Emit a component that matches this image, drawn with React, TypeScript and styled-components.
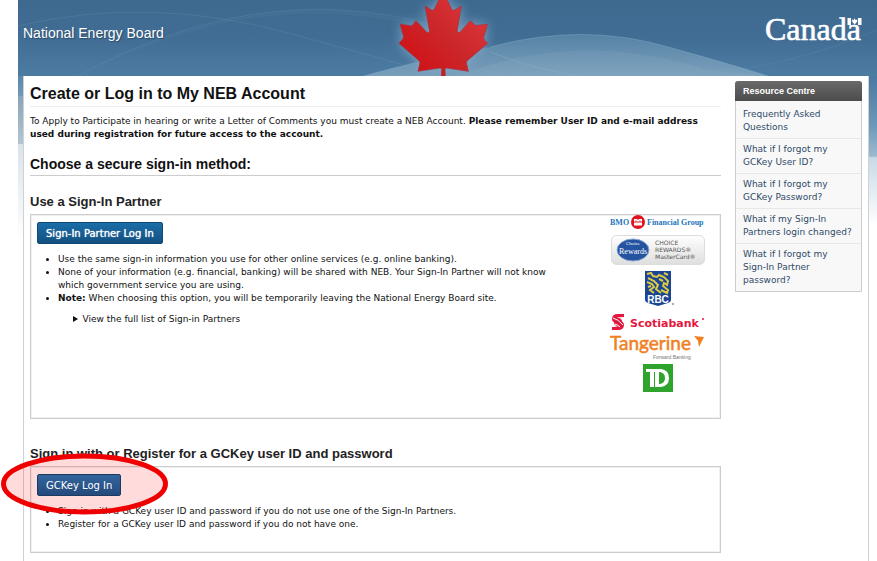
import React from "react";
import styled, { createGlobalStyle } from "styled-components";

const verdana = `"DejaVu Sans", Verdana, sans-serif`;
const arial = `"Liberation Sans", Arial, sans-serif`;

const GlobalStyle = createGlobalStyle`
  * { box-sizing: border-box; }
  body {
    margin: 0;
    background: #fff;
    color: #111;
    font: 9px/13px ${verdana};
  }
`;

const Page = styled.div`
  display: flex;
  flex-direction: column;
  min-height: 100vh;
  margin-left: 18px;
`;

const Banner = styled.header`
  position: relative;
  display: grid;
  grid-template-columns: 1fr auto 1fr;
  height: 76px;
  padding: 0 15px 0 5px;
  background: linear-gradient(#3e698f, #416d94 50%, #4d7ca3);
  overflow: hidden;
`;

const Waves = styled.svg`
  position: absolute;
  inset: 0;
  width: 100%;
  height: 100%;
`;

const SiteName = styled.div`
  position: relative;
  padding-top: 25px;
  color: #fff;
  font: 14px/16px ${arial};
  text-shadow: 1px 1px 1px #2a4a68;
`;

const Leaf = styled.svg`
  position: relative;
  width: 90px;
  height: 76px;
  overflow: visible;
  filter: drop-shadow(0 0 6px #7fa6c4);
`;

const Wordmark = styled.svg`
  position: relative;
  justify-self: end;
  width: 100px;
  height: 48px;
`;

const Backdrop = styled.div`
  display: flex;
  flex: 1;
  padding: 0 8px 0 5px;
  background:
    linear-gradient(#5a86aa, #7298b7 20px, #88a4ba 20px, #b3c5d2 68px, #d9e3ea 68px, #fff 165px) left / 5px 100% no-repeat,
    linear-gradient(#4a789f, #6e98b9 50px, #9dbace 80px, #c9dae6 82px, #fff 150px) right / 8px 100% no-repeat;
`;

const Content = styled.div`
  display: flex;
  flex: 1;
  align-items: flex-start;
  gap: 14px;
  padding: 5px 6px 8px;
  border: solid #cdd2d6;
  border-width: 0 1px;
  background: #fff;
`;

const Main = styled.main`
  flex: 1;
  min-width: 0;
`;

const Title = styled.h1`
  margin: 0 0 8px;
  padding: 2px 0 1px;
  border-bottom: 1px solid #eee;
  font: bold 16px/22px ${arial};
`;

const Subtitle = styled.h2`
  margin: 14px 0 18px;
  padding-bottom: 2px;
  border-bottom: 1px solid #ccc;
  font: bold 14px/18px ${arial};
`;

const Intro = styled.p`
  margin: 0;
`;

const SectionTitle = styled.h3`
  margin: 0 0 4px;
  color: #222;
  font: bold 13px/16px ${arial};
`;

const Panel = styled.section<{ $minHeight: number }>`
  position: relative;
  display: flex;
  justify-content: space-between;
  min-height: ${(p) => p.$minHeight}px;
  padding: 0 14px 0 6px;
  border: 1px solid #ccc;
  box-shadow: inset 0 0 0 1px #f0f0f0;
  margin-bottom: 27px;
  &:last-child { margin-bottom: 0; }
`;

const PanelBody = styled.div`
  flex: 0 1 536px;
  padding-top: 7px;
`;

const LogInButton = styled.button<{ $tone: "bright" | "dark" }>`
  position: relative;
  z-index: 1;
  height: 22px;
  padding: 0 8px;
  border: 1px solid ${(p) => (p.$tone === "bright" ? "#0f4a76" : "#1c3a60")};
  border-radius: 2px;
  background: ${(p) =>
    p.$tone === "bright" ? "linear-gradient(#1a6ea8, #135080)" : "linear-gradient(#33659c, #244a7c)"};
  color: #fff;
  font: 10px/13px ${verdana};
  text-shadow: 0 0 1px ${(p) => (p.$tone === "bright" ? "#fff" : "transparent")};
`;

const Bullets = styled.ul`
  margin: 9px 0 0;
  padding-left: 21px;
`;

const Disclosure = styled.details`
  margin: 8px 0 0 36px;
`;

const Partners = styled.div`
  display: flex;
  flex-direction: column;
  align-items: center;
  width: 96px;
`;

const Logo = styled.svg`
  display: block;
  overflow: visible;
`;

const Highlight = styled.svg`
  position: absolute;
  left: -30px;
  top: -14px;
  width: 167px;
  height: 62px;
  pointer-events: none;
`;

const Sidebar = styled.nav`
  width: 127px;
  border: 1px solid #ccc;
  border-radius: 3px 3px 0 0;
  background: #f8f8f8;
`;

const SidebarTitle = styled.h2`
  margin: -1px;
  padding: 0 8px;
  border-radius: 3px 3px 0 0;
  background: linear-gradient(#6a6a6a, #4c4c4c);
  color: #fff;
  font: bold 9px/20px ${arial};
`;

const SidebarLink = styled.a`
  display: block;
  padding: 4px 7px;
  border-bottom: 1px solid #e8e8e8;
  color: #2f4a68;
  text-decoration: none;
  &:first-of-type { padding-top: 8px; }
  &:last-child { border-bottom: 0; }
`;

const NoBreak = styled.span`
  white-space: nowrap;
`;

function BannerWaves() {
  return (
    <Waves viewBox="0 0 859 76" preserveAspectRatio="none" aria-hidden="true">
      <defs>
        <linearGradient id="hill" x1="0" y1="0" x2="0" y2="1">
          <stop offset="0" stopColor="#8db4cc" stopOpacity=".3" />
          <stop offset="1" stopColor="#9dbccf" stopOpacity=".55" />
        </linearGradient>
      </defs>
      <path d="M345 76 Q400 60 472 47 Q565 22 650 47 Q705 62 750 76Z" fill="url(#hill)" />
      <path d="M440 76 Q560 28 690 70 L750 76Z" fill="#a8c6d8" opacity=".12" />
      <path d="M472 52 Q520 70 560 76 M472 47 Q565 22 650 47 Q705 62 750 76" fill="none" stroke="#8fb6ce" opacity=".35" />
      <path d="M60 76 Q260 -28 420 30 Q320 4 220 20 Q130 40 60 76Z" fill="#7fa7c4" opacity=".08" />
      <path d="M0 26 Q130 -5 270 33 T420 76" fill="none" stroke="#7fa7c4" opacity=".2" />
      <path d="M60 76 Q240 -22 410 24" fill="none" stroke="#7fa7c4" opacity=".2" />
      <path d="M680 76 Q780 64 859 30" fill="none" stroke="#7fa7c4" opacity=".15" />
    </Waves>
  );
}

function MapleLeaf() {
  return (
    <Leaf viewBox="0 0 270 228" aria-hidden="true">
      <defs>
        <linearGradient id="leaf" x1="1" y1="0" x2="0" y2="1">
          <stop offset="0" stopColor="#e23d40" />
          <stop offset=".5" stopColor="#cb272b" />
          <stop offset="1" stopColor="#d20a10" />
        </linearGradient>
      </defs>
      <path
        d="M135 -26 L109 27 Q106 32 100 30 L81 18 L94 90 Q94 103 85 95 L54 62 L44 75 Q42 78 36 77 L6 72 L16 107 Q18 115 12 120 L3 130 L63 182 Q67 186 65 192 L60 214 L126 204 Q132 204 131 210 L130 228 H142 L141 210 Q140 204 146 204 L211 214 L206 192 Q204 186 208 182 L269 130 L260 121 Q255 116 258 108 L269 73 L237 76 Q231 77 228 72 L217 62 L187 95 Q178 103 178 90 L190 18 L170 30 Q164 32 161 27Z"
        fill="url(#leaf)"
        stroke="#a8323f"
        strokeWidth="2"
      />
    </Leaf>
  );
}

function CanadaWordmark() {
  return (
    <Wordmark viewBox="0 0 100 48" role="img" aria-label="Canada">
      <text x="3" y="40" fill="#fff" stroke="#fff" strokeWidth=".6" fontFamily="Liberation Serif, serif" fontSize="32">
        Canada
      </text>
      <path
        d="M85.500 18 h3.500 v7 h-3.500z M96 18 h3.500 v7 h-3.500z M92.500 18 l1 2 2-.5 -.5 2.500 -2 2 -.3 1 -.4-1 -2-2 -.3-2.500 2 .5z"
        fill="#fff"
      />
    </Wordmark>
  );
}

function PartnerLogos() {
  return (
    <Partners>
      <Logo width="96" height="16" viewBox="0 0 96 16" role="img" aria-label="BMO Financial Group">
        <g fill="#2476bd" fontFamily="Liberation Serif, serif" fontSize="8" fontWeight="bold">
          <text x="0" y="10">BMO</text>
          <text x="37" y="10">Financial Group</text>
        </g>
        <circle cx="28" cy="7" r="7" fill="#e0141f" />
        <path d="M24 4h3l1 1 1-1h3v2.500h-8z M24 7.500h8v3h-8z" fill="#fff" />
        <path d="M26 5.500v1 M30 5.500v1" stroke="#e0141f" />
      </Logo>
      <Logo width="94" height="35" viewBox="0 0 94 35" role="img" aria-label="Choice Rewards MasterCard">
        <defs>
          <linearGradient id="card" x1="0" y1="0" x2="0" y2="1">
            <stop offset="0" stopColor="#fff" />
            <stop offset="1" stopColor="#dedede" />
          </linearGradient>
        </defs>
        <rect x=".5" y="4.500" width="93" height="29" rx="5" fill="url(#card)" stroke="#ddd" />
        <ellipse cx="22" cy="19" rx="16" ry="11" fill="#2453a0" stroke="#8ba6d0" />
        <g fill="#fff" fontFamily="Liberation Serif, serif" textAnchor="middle">
          <text x="22" y="14" fontSize="5">Choice</text>
          <text x="22" y="23" fontSize="8">Rewards</text>
        </g>
        <g fill="#555" fontFamily="DejaVu Sans, sans-serif" fontSize="6">
          <text x="44" y="14">CHOICE</text>
          <text x="44" y="21">REWARDS®</text>
          <text x="44" y="28">MasterCard®</text>
        </g>
      </Logo>
      <Logo width="28" height="44" viewBox="0 0 28 44" role="img" aria-label="RBC">
        <path d="M1 5 H27 V34 Q27 36 24 37 L14 40 L4 37 Q1 36 1 34Z" fill="#1b4593" />
        <path
          d="M3 8 L7 7 9 10 13 11 15 9 20 11 24 15 23 19 20 17 19 20 24 24 23 27 17 24 M4 12 L10 15 14 19 12 23 17 27 M3 16 L8 18 10 21 6 24 10 27 M20 7 L24 9 M15 13 L19 15 M4 21 L7 20"
          fill="none"
          stroke="#dcc944"
          strokeWidth="2"
        />
        <text x="14" y="37" textAnchor="middle" fill="#fff" fontFamily="Liberation Sans, sans-serif" fontWeight="bold" fontSize="10">RBC</text>
        <circle cx="29" cy="38" r="1" fill="#7892bd" />
      </Logo>
      <Logo width="96" height="24" viewBox="0 0 96 24" role="img" aria-label="Scotiabank">
        <path
          d="M14 4 H8 Q2 4 2 9 Q2 12 6 13 L9 15 Q8 17 2 17 V20 H8 Q14 20 14 15 Q14 12 10 10 L7 8 Q8 7 14 7Z"
          fill="#e5173f"
        />
        <circle cx="8" cy="12" r="4" fill="#e5173f" />
        <path d="M3 8 Q8 9 13 15 M5 14 Q8 15 10 17" fill="none" stroke="#fff" />
        <text x="20" y="17" fill="#e5173f" fontFamily="DejaVu Sans, sans-serif" fontWeight="bold" fontSize="11">Scotiabank</text>
        <circle cx="93" cy="9" r="1" fill="#e5173f" />
      </Logo>
      <Logo width="96" height="29" viewBox="0 0 96 29" role="img" aria-label="Tangerine Forward Banking">
        <text x="0" y="16" fill="#f08122" stroke="#f08122" strokeWidth=".5" fontFamily="Lato, sans-serif" fontSize="19">Tangerine</text>
        <path d="M84 2 L94 3 L89 13 L88 7Z" fill="#f08122" />
        <text x="43" y="25" fill="#777" fontFamily="Liberation Sans, sans-serif" fontSize="5">Forward Banking</text>
      </Logo>
      <Logo width="32" height="30" viewBox="0 0 32 30" role="img" aria-label="TD">
        <rect x="1" y="1" width="30" height="28" fill="#2fa42c" />
        <path
          d="M4 6 H19 Q27 7 27 15 Q27 23 19 24 H13 V9 H12 V24 H8 V9 H4Z M17 9 V21 H18 Q23 20 23 15 Q23 10 18 9Z"
          fill="#fff"
          fillRule="evenodd"
        />
      </Logo>
    </Partners>
  );
}

export default function App() {
  return (
    <>
      <GlobalStyle />
      <Page>
        <Banner>
          <BannerWaves />
          <SiteName>National Energy Board</SiteName>
          <MapleLeaf />
          <CanadaWordmark />
        </Banner>
        <Backdrop>
          <Content>
            <Main>
              <Title>Create or Log in to My NEB Account</Title>
              <Intro>
                To Apply to Participate in hearing or write a Letter of Comments you must create a NEB Account.{" "}
                <strong>
                  Please remember User ID and e-mail address used during registration for future access to the account.
                </strong>
              </Intro>
              <Subtitle>Choose a secure sign-in method:</Subtitle>

              <SectionTitle>Use a Sign-In Partner</SectionTitle>
              <Panel $minHeight={205}>
                <PanelBody>
                  <LogInButton type="button" $tone="bright">Sign-In Partner Log In</LogInButton>
                  <Bullets>
                    <li>Use the same sign-in information you use for other online services (e.g. online banking).</li>
                    <li>
                      None of your information (e.g. financial, banking) will be shared with NEB. Your Sign-In Partner
                      will not know which government service you are using.
                    </li>
                    <li>
                      <strong>Note:</strong> When choosing this option, you will be temporarily leaving the National
                      Energy Board site.
                    </li>
                  </Bullets>
                  <Disclosure>
                    <summary>View the full list of Sign-in Partners</summary>
                  </Disclosure>
                </PanelBody>
                <PartnerLogos />
              </Panel>

              <SectionTitle>Sign in with or Register for a GCKey user ID and password</SectionTitle>
              <Panel $minHeight={87}>
                <PanelBody>
                  <LogInButton type="button" $tone="dark">GCKey Log In</LogInButton>
                  <Bullets>
                    <li>Sign in with a GCKey user ID and password if you do not use one of the Sign-In Partners.</li>
                    <li>Register for a GCKey user ID and password if you do not have one.</li>
                  </Bullets>
                </PanelBody>
                <Highlight viewBox="0 0 167 62" aria-hidden="true">
                  <ellipse cx="83.500" cy="31" rx="81" ry="28" fill="#ff0000" fillOpacity=".14" stroke="#ee0000" strokeWidth="5" />
                </Highlight>
              </Panel>
            </Main>
            <Sidebar aria-label="Resource Centre">
              <SidebarTitle>Resource Centre</SidebarTitle>
              <SidebarLink href="#">Frequently Asked Questions</SidebarLink>
              <SidebarLink href="#">What if I forgot my GCKey User ID?</SidebarLink>
              <SidebarLink href="#">What if I forgot my GCKey Password?</SidebarLink>
              <SidebarLink href="#">What if my <NoBreak>Sign-In</NoBreak> Partners login changed?</SidebarLink>
              <SidebarLink href="#">What if I forgot my <NoBreak>Sign-In</NoBreak> Partner password?</SidebarLink>
            </Sidebar>
          </Content>
        </Backdrop>
      </Page>
    </>
  );
}
